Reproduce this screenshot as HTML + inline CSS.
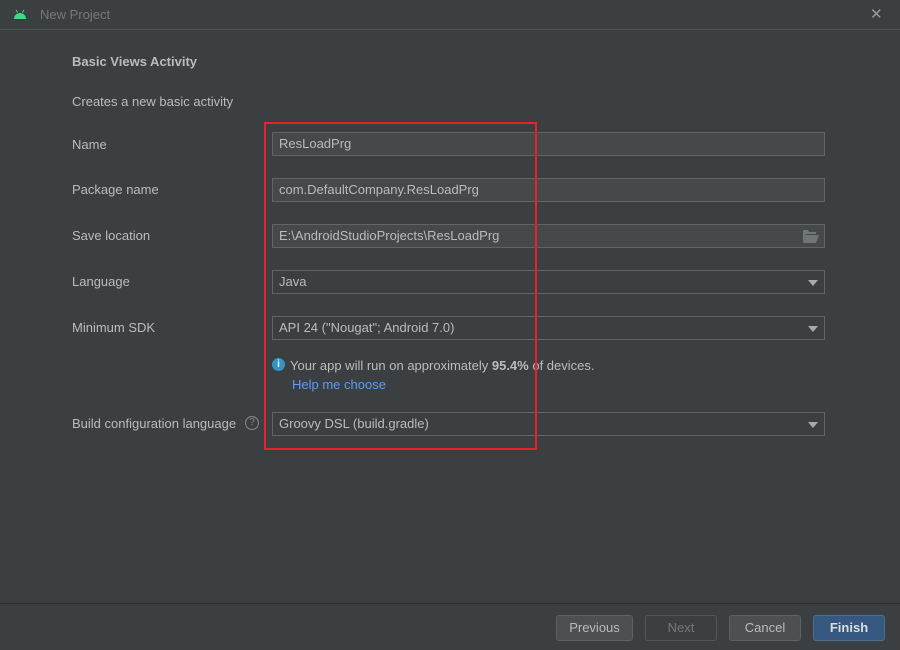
<!DOCTYPE html><html><head><style>
body{margin:0;width:900px;height:650px;background:#3c3f41;font-family:"Liberation Sans",sans-serif;font-size:13px;color:#bbbbbb;position:relative;overflow:hidden}
.a{position:absolute}
.f{position:absolute;left:272px;width:545px;height:22px;background:#45494a;border:1px solid #646464;line-height:22px;padding-left:6px;box-sizing:content-box;color:#bbb}
.dd{background:#3c3f41}
.arr{position:absolute;right:6px;top:9px;width:0;height:0;border-left:5px solid transparent;border-right:5px solid transparent;border-top:6px solid #aaa}
.l{position:absolute;left:72px}
.b{position:absolute;top:615px;height:24px;line-height:24px;text-align:center;border:1px solid #5e6060;border-radius:3px;background:#4c5052;color:#bbb}
</style></head><body>
<div class="a" style="left:0;top:0;width:900px;height:29px;background:#3c3f41;border-bottom:1px solid #515151"></div>
<svg class="a" style="left:13px;top:9px" width="14" height="10" viewBox="0 0 14 10"><path d="M1 10 A6 6 0 0 1 13 10 Z" fill="#3ddc84"/><line x1="3" y1="1" x2="4.5" y2="3.5" stroke="#3ddc84"/><line x1="11" y1="1" x2="9.5" y2="3.5" stroke="#3ddc84"/></svg>
<div class="a" style="left:40px;top:7px;color:#787878">New Project</div>
<div class="a" style="left:870px;top:5px;color:#999;font-size:15px">✕</div>
<div class="l" style="top:54px;font-weight:bold">Basic Views Activity</div>
<div class="l" style="top:94px">Creates a new basic activity</div>
<div class="l" style="top:137px">Name</div>
<div class="l" style="top:182px">Package name</div>
<div class="l" style="top:228px">Save location</div>
<div class="l" style="top:274px">Language</div>
<div class="l" style="top:320px">Minimum SDK</div>
<div class="l" style="top:416px">Build configuration language</div>
<div class="a" style="left:245px;top:416px;width:12px;height:12px;border:1px solid #888;border-radius:50%;font-size:10px;line-height:12px;text-align:center;color:#888">?</div>
<div class="f" style="top:132px">ResLoadPrg</div>
<div class="f" style="top:178px">com.DefaultCompany.ResLoadPrg</div>
<div class="f" style="top:224px">E:\AndroidStudioProjects\ResLoadPrg
<svg class="a" style="right:5px;top:5px" width="16" height="13" viewBox="0 0 16 13"><path d="M0 0h5l1 2h7v2H3L0 13Z" fill="#707677"/><path d="M3 5h13l-3 8H0Z" fill="#707677"/></svg></div>
<div class="f dd" style="top:270px">Java<div class="arr"></div></div>
<div class="f dd" style="top:316px">API 24 ("Nougat"; Android 7.0)<div class="arr"></div></div>
<div class="f dd" style="top:412px">Groovy DSL (build.gradle)<div class="arr"></div></div>
<div class="a" style="left:272px;top:358px;width:13px;height:13px;border-radius:50%;background:#3592c4;color:#fff;font-size:10px;font-weight:bold;text-align:center;line-height:13px">i</div>
<div class="a" style="left:290px;top:358px">Your app will run on approximately <b>95.4%</b> of devices.</div>
<div class="a" style="left:292px;top:377px;color:#589df6">Help me choose</div>
<div class="a" style="left:264px;top:122px;width:269px;height:324px;border:2px solid #e8202a"></div>
<div class="a" style="left:0;top:603px;width:900px;height:1px;background:#2b2b2b"></div>
<div class="b" style="left:556px;width:75px">Previous</div>
<div class="b" style="left:645px;width:70px;background:#3c3f41;color:#777;border-color:#555">Next</div>
<div class="b" style="left:729px;width:70px">Cancel</div>
<div class="b" style="left:813px;width:70px;background:#365880;border-color:#4c708c;font-weight:bold;color:#ddd">Finish</div>
</body></html>
